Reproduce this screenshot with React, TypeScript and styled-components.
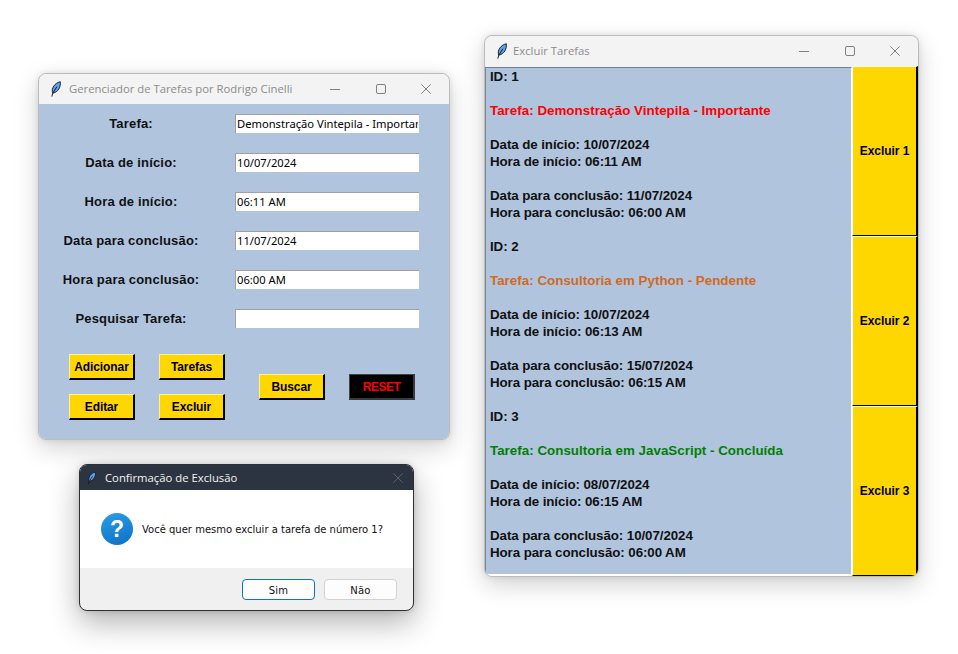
import React from "react";
import styled, { createGlobalStyle } from "styled-components";

const Global = createGlobalStyle`
  html, body { margin: 0; padding: 0; background: #ffffff; }
  #root { width: 958px; height: 654px; }
`;

const Desktop = styled.div`
  position: relative;
  width: 958px;
  height: 654px;
  overflow: hidden;
  background: #ffffff;
`;

const Win = styled.section<{ $x: number; $y: number; $w: number; $h: number }>`
  position: absolute;
  left: ${(p) => p.$x}px;
  top: ${(p) => p.$y}px;
  width: ${(p) => p.$w}px;
  height: ${(p) => p.$h}px;
  box-sizing: border-box;
  display: flex;
  flex-direction: column;
  border: 1px solid #bcbcbc;
  border-radius: 8px;
  background: #f3f3f3;
  box-shadow: 0 8px 24px rgba(0, 0, 0, 0.18), 0 0 6px rgba(0, 0, 0, 0.1);
`;

const TitleBar = styled.header<{ $h: number; $lift: number }>`
  flex: none;
  box-sizing: border-box;
  height: ${(p) => p.$h}px;
  display: flex;
  align-items: center;
  padding: 0 0 ${(p) => p.$lift}px 11px;
  background: #f3f3f3;
  border-radius: 8px 8px 0 0;
`;

const TitleText = styled.span<{ $gap: number }>`
  margin-left: ${(p) => p.$gap}px;
  flex: 1;
  font: 11.3px "Open Sans", sans-serif;
  color: #8b8b8b;
  white-space: nowrap;
`;

const Controls = styled.div`
  display: flex;
  align-items: center;
  gap: 35.5px;
  padding-right: 18px;
`;

const ControlIcon = styled.svg`
  display: block;
  flex: none;
  width: 10px;
  height: 10px;
  fill: none;
  stroke: #808080;
  stroke-width: 1;
`;

const FeatherIcon = styled.svg<{ $w: number; $h: number }>`
  display: block;
  flex: none;
  width: ${(p) => p.$w}px;
  height: ${(p) => p.$h}px;
`;

const Feather = ({ w = 11, h = 16 }: { w?: number; h?: number }) => (
  <FeatherIcon $w={w} $h={h} viewBox="0 0 12 17" aria-hidden="true">
    <path d="M3 13C1 8 5 2 11.2 0.6C12 6 9 12 3 13Z" fill="#5aa2f2" stroke="#101010" strokeWidth="1" />
    <path d="M2 16.8L3 13L7.5 6" fill="none" stroke="#101010" strokeWidth="1" />
  </FeatherIcon>
);

const WinControls = () => (
  <Controls>
    <ControlIcon viewBox="0 0 10 10"><path d="M0 5.5H10" /></ControlIcon>
    <ControlIcon viewBox="0 0 10 10"><rect x="0.5" y="0.5" width="9" height="9" rx="1.5" /></ControlIcon>
    <ControlIcon viewBox="0 0 10 10"><path d="M0.3 0.3L9.7 9.7M9.7 0.3L0.3 9.7" /></ControlIcon>
  </Controls>
);

const FormBody = styled.div`
  flex: 1;
  background: #b0c4de;
  padding-top: 10px;
  border-radius: 0 0 7px 7px;
`;

const FormGrid = styled.div`
  display: grid;
  grid-template-columns: 184px 184px;
  column-gap: 12px;
  row-gap: 20px;
`;

const FieldLabel = styled.label`
  height: 19px;
  text-align: center;
  font: bold 13px/20px "Liberation Sans", Arial, sans-serif;
  letter-spacing: 0.18px;
  color: #111111;
  white-space: nowrap;
`;

const FieldInput = styled.input`
  box-sizing: border-box;
  width: 184px;
  height: 19px;
  padding: 0 1px 1px;
  margin: 0;
  border: none;
  border-top: 1px solid #a0a0a0;
  border-left: 1px solid #a0a0a0;
  border-radius: 0;
  outline: none;
  background: #ffffff;
  color: #000000;
  font: 11.2px "Noto Sans", sans-serif;
`;

const ActionArea = styled.div`
  display: flex;
  align-items: center;
  margin: 26px 0 0 30px;
  gap: 34px;
`;

const ButtonGrid = styled.div`
  display: grid;
  grid-template-columns: 66px 66px;
  column-gap: 24px;
  row-gap: 14px;
`;

const ActionButton = styled.button<{ $danger?: boolean }>`
  box-sizing: border-box;
  width: 66px;
  height: 26px;
  padding: 0;
  margin: 0;
  border-style: solid;
  border-width: 1px 2px 2px 1px;
  border-color: ${(p) => (p.$danger ? "#444444 #3a3a3a #3a3a3a #444444" : "#fff09a #000000 #000000 #fff09a")};
  background: ${(p) => (p.$danger ? "#000000" : "#ffd700")};
  color: ${(p) => (p.$danger ? "#ff0000" : "#000000")};
  font: bold 12px "Liberation Sans", Arial, sans-serif;
  letter-spacing: ${(p) => (p.$danger ? "-0.5px" : "-0.1px")};
`;

const SearchGroup = styled.div`
  display: flex;
  gap: 24px;
`;

const TaskBody = styled.div`
  flex: 1;
  min-height: 0;
  display: flex;
  overflow: hidden;
  border-radius: 0 0 7px 7px;
`;

const TaskText = styled.div`
  box-sizing: border-box;
  width: 367px;
  height: calc(100% - 1px);
  margin-top: 1px;
  padding: 0 0 0 4px;
  background: #b0c4de;
  border-top: 1px solid #6f7f94;
  border-left: 1px solid #7a8595;
  border-right: 1px solid #ffffff;
  border-bottom: 2px solid #ffffff;
  overflow: hidden;
`;

const TaskEntry = styled.pre`
  margin: 0;
  font: bold 13.33px/17px "Liberation Sans", Arial, sans-serif;
  letter-spacing: -0.08px;
  color: #111111;
  white-space: pre;
`;

const TaskName = styled.span<{ $color: string }>`
  color: ${(p) => p.$color};
  letter-spacing: 0.03px;
`;

const DeleteColumn = styled.div`
  flex: 1;
  display: flex;
  flex-direction: column;
  background: #f3f3f3;
`;

const DeleteButton = styled.button`
  box-sizing: border-box;
  flex: none;
  width: 66px;
  height: 170px;
  padding: 0;
  margin: 0;
  border-style: solid;
  border-width: 1px 2px 1px 1px;
  border-color: #ffffff #000000 #000000 #ffffff;
  background: #ffd700;
  color: #000000;
  font: bold 12px "Liberation Sans", Arial, sans-serif;
  letter-spacing: -0.05px;
`;

const DialogWin = styled(Win)`
  border: 1px solid #2b2f36;
  background: #f0f0f0;
  box-shadow: 0 12px 30px rgba(0, 0, 0, 0.3), 0 0 6px rgba(0, 0, 0, 0.15);
`;

const DialogTitleBar = styled(TitleBar)`
  background: #2d3441;
  padding-left: 7px;
  border-radius: 7px 7px 0 0;
`;

const DialogTitle = styled.span`
  margin-left: 9px;
  flex: 1;
  font: 11.3px "Open Sans", sans-serif;
  color: #f2f2f2;
  white-space: nowrap;
`;

const DialogClose = styled(ControlIcon)`
  stroke: #5c626c;
  margin-right: 10px;
`;

const DialogMessage = styled.div`
  flex: none;
  height: 78px;
  background: #ffffff;
  display: flex;
  align-items: center;
  padding-left: 21px;
  gap: 9px;
`;

const QuestionIcon = styled.div`
  flex: none;
  width: 32px;
  height: 32px;
  border-radius: 50%;
  display: flex;
  align-items: center;
  justify-content: center;
  background: linear-gradient(160deg, #2a9fe6 0%, #0e6fc4 100%);
  color: #ffffff;
  font: bold 23px "Liberation Sans", Arial, sans-serif;
`;

const MessageText = styled.span`
  font: 10px "DejaVu Sans", sans-serif;
  color: #101010;
  white-space: nowrap;
`;

const DialogActions = styled.div`
  flex: 1;
  display: flex;
  justify-content: flex-end;
  align-items: flex-start;
  gap: 9px;
  padding: 11px 16px 0 0;
  border-radius: 0 0 8px 8px;
`;

const DialogButton = styled.button<{ $primary?: boolean }>`
  box-sizing: border-box;
  width: 73px;
  height: 21px;
  padding: 1px 0 0;
  margin: 0;
  border: 1px solid ${(p) => (p.$primary ? "#0a74cf" : "#d2d2d2")};
  border-radius: 4px;
  background: #fdfdfd;
  color: #111111;
  font: 10px "DejaVu Sans", sans-serif;
  letter-spacing: 0.2px;
`;

const fields = [
  ["Tarefa:", "Demonstração Vintepila - Importante"],
  ["Data de início:", "10/07/2024"],
  ["Hora de início:", "06:11 AM"],
  ["Data para conclusão:", "11/07/2024"],
  ["Hora para conclusão:", "06:00 AM"],
  ["Pesquisar Tarefa:", ""],
];

const tasks = [
  { id: 1, name: "Demonstração Vintepila - Importante", color: "#ff0000", start: "10/07/2024", startH: "06:11 AM", end: "11/07/2024", endH: "06:00 AM" },
  { id: 2, name: "Consultoria em Python - Pendente", color: "#d2691e", start: "10/07/2024", startH: "06:13 AM", end: "15/07/2024", endH: "06:15 AM" },
  { id: 3, name: "Consultoria em JavaScript - Concluída", color: "#008000", start: "08/07/2024", startH: "06:15 AM", end: "10/07/2024", endH: "06:00 AM" },
];

export default function App() {
  return (
    <Desktop>
      <Global />
      <Win $x={38} $y={73} $w={412} $h={367}>
        <TitleBar $h={30} $lift={1}>
          <Feather />
          <TitleText $gap={8}>Gerenciador de Tarefas por Rodrigo Cinelli</TitleText>
          <WinControls />
        </TitleBar>
        <FormBody>
          <FormGrid>
            {fields.map(([label, value]) => (
              <React.Fragment key={label}>
                <FieldLabel>{label}</FieldLabel>
                <FieldInput readOnly value={value} />
              </React.Fragment>
            ))}
          </FormGrid>
          <ActionArea>
            <ButtonGrid>
              <ActionButton>Adicionar</ActionButton>
              <ActionButton>Tarefas</ActionButton>
              <ActionButton>Editar</ActionButton>
              <ActionButton>Excluir</ActionButton>
            </ButtonGrid>
            <SearchGroup>
              <ActionButton>Buscar</ActionButton>
              <ActionButton $danger>RESET</ActionButton>
            </SearchGroup>
          </ActionArea>
        </FormBody>
      </Win>

      <Win $x={484} $y={35} $w={435} $h={542}>
        <TitleBar $h={30} $lift={1}>
          <Feather />
          <TitleText $gap={6}>Excluir Tarefas</TitleText>
          <WinControls />
        </TitleBar>
        <TaskBody>
          <TaskText>
            {tasks.map((t) => (
              <TaskEntry key={t.id}>
                {`ID: ${t.id}\n\n`}
                <TaskName $color={t.color}>{`Tarefa: ${t.name}`}</TaskName>
                {`\n\nData de início: ${t.start}\nHora de início: ${t.startH}\n\nData para conclusão: ${t.end}\nHora para conclusão: ${t.endH}\n\n`}
              </TaskEntry>
            ))}
          </TaskText>
          <DeleteColumn>
            <DeleteButton>Excluir 1</DeleteButton>
            <DeleteButton>Excluir 2</DeleteButton>
            <DeleteButton>Excluir 3</DeleteButton>
          </DeleteColumn>
        </TaskBody>
      </Win>

      <DialogWin $x={79} $y={464} $w={335} $h={147}>
        <DialogTitleBar $h={25} $lift={0}>
          <Feather w={9} h={14} />
          <DialogTitle>Confirmação de Exclusão</DialogTitle>
          <DialogClose viewBox="0 0 10 10"><path d="M0.3 0.3L9.7 9.7M9.7 0.3L0.3 9.7" /></DialogClose>
        </DialogTitleBar>
        <DialogMessage>
          <QuestionIcon>?</QuestionIcon>
          <MessageText>Você quer mesmo excluir a tarefa de número 1?</MessageText>
        </DialogMessage>
        <DialogActions>
          <DialogButton $primary>Sim</DialogButton>
          <DialogButton>Não</DialogButton>
        </DialogActions>
      </DialogWin>
    </Desktop>
  );
}
